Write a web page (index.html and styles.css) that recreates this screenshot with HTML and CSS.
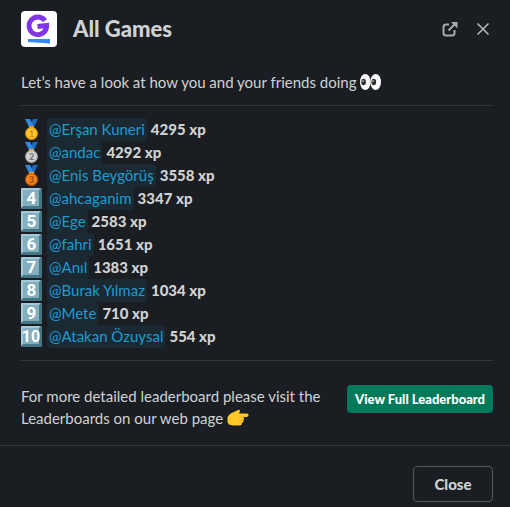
FILE: index.html
```html
<!DOCTYPE html>
<html lang="en">
<head>
  <meta charset="UTF-8"/>
  <meta name="viewport" content="width=device-width, initial-scale=1.0"/>
  <title>All Games</title>
  <link rel="stylesheet" href="styles.css">
</head>
<body>
  <!-- Shared icon shapes -->
  <svg class="defs" width="0" height="0" aria-hidden="true">
    <symbol id="keycap" viewBox="0 0 22 22">
      <rect width="21" height="21" rx="1" fill="#457686"/>
      <path d="M0 1 Q0 0 1 0 H20 L17 3 H3 V17 L0 20Z" fill="#a5cad7"/>
      <rect x="2" y="2" width="16" height="16" fill="#84afbf"/>
    </symbol>
    <symbol id="ribbon" viewBox="0 0 22 22">
      <path d="M17 0 H12 L8 8 L10 10 H12Z" fill="#1b69bd"/>
      <path d="M4 0 H9 L13 8 L12 10 H9Z" fill="#2f8ae4"/>
      <path d="M8 7 H13 V9 H8Z" fill="#e3a52c"/>
    </symbol>
  </svg>

  <div class="modal">
    <header class="modal-header">
      <svg class="logo" viewBox="0 0 36 36" role="img" aria-label="Logo">
        <rect width="36" height="36" rx="4" fill="#fff"/>
        <path d="M24 9.600 A8.800 8.800 0 1 0 25.700 14.500 L16.500 15.500" fill="none" stroke="#7f35e8" stroke-width="4.800"/>
        <path d="M7 28 H29 V32.500 L7 31Z" fill="#3387ff"/>
      </svg>
      <h1>All Games</h1>
      <button class="icon-button" aria-label="Open in new window">
        <svg width="18" height="18" viewBox="0 0 18 18" fill="none" stroke="#a9abad" stroke-width="2">
          <path d="M8 4.500 H5 Q2.500 4.500 2.500 7 V13 Q2.500 15.500 5 15.500 H11 Q13.500 15.500 13.500 13 V10"/>
          <path d="M7.500 10.500 L14.500 3.500"/>
          <path d="M10 2 H16.500 V8.500Z" fill="#a9abad" stroke="none"/>
        </svg>
      </button>
      <button class="icon-button" aria-label="Close dialog">
        <svg width="18" height="18" viewBox="0 0 18 18" fill="none" stroke="#b6b8ba" stroke-width="1.500">
          <path d="M3.500 3.500 L14.500 14.500 M14.500 3.500 L3.500 14.500"/>
        </svg>
      </button>
    </header>

    <main class="modal-body">
      <p class="intro">Let’s have a look at how you and your friends doing
        <svg class="emoji" viewBox="0 0 22 22" role="img" aria-label="eyes">
          <ellipse cx="5.300" cy="11" rx="5.300" ry="8" fill="#fafafa"/>
          <ellipse cx="15.700" cy="11" rx="5.300" ry="8" fill="#fafafa"/>
          <ellipse cx="3.600" cy="11" rx="2.300" ry="3.200" fill="#303030"/>
          <ellipse cx="13.800" cy="11" rx="2.300" ry="3.200" fill="#303030"/>
          <circle cx="3" cy="10" r="0.800" fill="#ddd"/>
          <circle cx="13" cy="10" r="0.800" fill="#ddd"/>
        </svg>
      </p>

      <ol class="ranking">
        <li>
          <svg class="rank" viewBox="0 0 22 22" role="img" aria-label="1">
            <use href="#ribbon"/>
            <circle cx="10.500" cy="14.500" r="6.400" fill="#e9a30c"/>
            <circle cx="10.500" cy="14.500" r="5" fill="#ffc72e"/>
            <text class="medal-number gold" x="10.500" y="18">1</text>
          </svg>
          <a class="mention" href="#">@Erşan Kuneri</a>
          <b>4295 xp</b>
        </li>
        <li>
          <svg class="rank" viewBox="0 0 22 22" role="img" aria-label="2">
            <use href="#ribbon"/>
            <circle cx="10.500" cy="14.500" r="6.400" fill="#b5b5b5"/>
            <circle cx="10.500" cy="14.500" r="5" fill="#d2d2d2"/>
            <text class="medal-number silver" x="10.500" y="18">2</text>
          </svg>
          <a class="mention" href="#">@andac</a>
          <b>4292 xp</b>
        </li>
        <li>
          <svg class="rank" viewBox="0 0 22 22" role="img" aria-label="3">
            <use href="#ribbon"/>
            <circle cx="10.500" cy="14.500" r="6.400" fill="#d2640d"/>
            <circle cx="10.500" cy="14.500" r="5" fill="#f18622"/>
            <text class="medal-number bronze" x="10.500" y="18">3</text>
          </svg>
          <a class="mention" href="#">@Enis Beygörüş</a>
          <b>3558 xp</b>
        </li>
        <li>
          <svg class="rank" viewBox="0 0 22 22" role="img" aria-label="4">
            <use href="#keycap"/>
            <text class="key-number" x="10.500" y="16">4</text>
          </svg>
          <a class="mention" href="#">@ahcaganim</a>
          <b>3347 xp</b>
        </li>
        <li>
          <svg class="rank" viewBox="0 0 22 22" role="img" aria-label="5">
            <use href="#keycap"/>
            <text class="key-number" x="10.500" y="16">5</text>
          </svg>
          <a class="mention" href="#">@Ege</a>
          <b>2583 xp</b>
        </li>
        <li>
          <svg class="rank" viewBox="0 0 22 22" role="img" aria-label="6">
            <use href="#keycap"/>
            <text class="key-number" x="10.500" y="16">6</text>
          </svg>
          <a class="mention" href="#">@fahri</a>
          <b>1651 xp</b>
        </li>
        <li>
          <svg class="rank" viewBox="0 0 22 22" role="img" aria-label="7">
            <use href="#keycap"/>
            <text class="key-number" x="10.500" y="16">7</text>
          </svg>
          <a class="mention" href="#">@Anıl</a>
          <b>1383 xp</b>
        </li>
        <li>
          <svg class="rank" viewBox="0 0 22 22" role="img" aria-label="8">
            <use href="#keycap"/>
            <text class="key-number" x="10.500" y="16">8</text>
          </svg>
          <a class="mention" href="#">@Burak Yılmaz</a>
          <b>1034 xp</b>
        </li>
        <li>
          <svg class="rank" viewBox="0 0 22 22" role="img" aria-label="9">
            <use href="#keycap"/>
            <text class="key-number" x="10.500" y="16">9</text>
          </svg>
          <a class="mention" href="#">@Mete</a>
          <b>710 xp</b>
        </li>
        <li>
          <svg class="rank" viewBox="0 0 22 22" role="img" aria-label="10">
            <use href="#keycap"/>
            <text class="key-number two-digits" x="10" y="16">10</text>
          </svg>
          <a class="mention" href="#">@Atakan Özuysal</a>
          <b>554 xp</b>
        </li>
      </ol>

      <div class="more">
        <p>For more detailed leaderboard please visit the Leaderboards on our web page
          <svg class="emoji" viewBox="0 0 22 22" role="img" aria-label="pointing right">
            <path d="M0.500 10 Q3 6 7 5 L10 3.500 Q13 2 13 4 L12 6.500 H20 Q22 7 21.500 8.500 Q21 10 19 10 H16 Q18 11 16.500 13 Q17 15 15 16 Q15 18.500 12 18.500 H6 Q1 18 0.500 15Z" fill="#ffc828"/>
            <path d="M16 10 H12 M16 13 H12 M15 16 H12" fill="none" stroke="#efa91d" stroke-width="0.800"/>
          </svg>
        </p>
        <button class="primary-button">View Full Leaderboard</button>
      </div>
    </main>

    <footer class="modal-footer">
      <button class="close-button">Close</button>
    </footer>
  </div>
</body>
</html>
```
FILE: styles.css
```css
* {
  box-sizing: border-box;
}

body {
  margin: 0;
  background-color: #1a1d21;
  color: #d1d2d3;
  font-family: Lato, sans-serif;
  font-size: 15px;
  line-height: 22px;
}

h1,
p {
  margin: 0;
}

button {
  font-family: inherit;
  cursor: pointer;
}

.defs {
  position: absolute;
}

.modal-header {
  display: flex;
  align-items: center;
  padding: 11px 17px 0 21px;
}

.logo {
  width: 36px;
  height: 36px;
  margin-right: 16px;
}

h1 {
  flex: 1;
  font-size: 22px;
  font-weight: 900;
  line-height: 30px;
}

.icon-button {
  display: flex;
  margin-left: 13px;
  padding: 1px;
  border: none;
  background: none;
}

.modal-body {
  padding: 24px 17px 16px 21px;
}

.emoji {
  width: 22px;
  height: 22px;
  vertical-align: top;
}

.intro {
  padding-bottom: 12px;
}

.ranking {
  margin: 0;
  padding: 12px 0;
  list-style: none;
  border-top: 1px solid #35373b;
  border-bottom: 1px solid #35373b;
}

.ranking li {
  display: flex;
  align-items: center;
  height: 23px;
  line-height: 23px;
}

.rank {
  width: 22px;
  height: 22px;
  margin-right: 4px;
}

.mention {
  margin-right: 4px;
  padding: 0 2px;
  border-radius: 3px;
  background-color: #1b2a32;
  color: #1d9bd1;
  text-decoration: none;
}

.ranking b {
  font-weight: 900;
}

.key-number,
.medal-number {
  text-anchor: middle;
}

.key-number {
  fill: #fff;
  font-family: Roboto, sans-serif;
  font-size: 17px;
  font-weight: 700;
}

.two-digits {
  font-size: 16px;
}

.medal-number {
  font-size: 9px;
  font-weight: 900;
}

.gold { fill: #d18a05; }
.silver { fill: #777; }
.bronze { fill: #a84705; }

.more {
  display: flex;
  align-items: flex-start;
  gap: 16px;
  padding-top: 24px;
}

.more p {
  flex: 1;
}

.primary-button {
  height: 28px;
  padding: 0 8px;
  border: none;
  border-radius: 4px;
  background-color: #007a5a;
  color: #fff;
  font-size: 13px;
  font-weight: 900;
}

.modal-footer {
  display: flex;
  justify-content: flex-end;
  padding: 20px 17px 5px;
  border-top: 1px solid #35373b;
}

.close-button {
  min-width: 80px;
  height: 36px;
  border: 1px solid #565856;
  border-radius: 4px;
  background: none;
  color: #d1d2d3;
  font-size: 15px;
  font-weight: 900;
}
```
